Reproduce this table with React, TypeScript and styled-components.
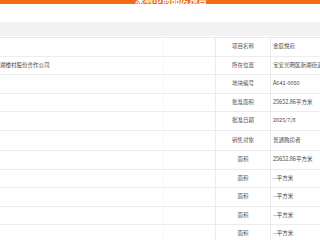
import React from "react";
import styled, { createGlobalStyle } from "styled-components";

const Global = createGlobalStyle`
  html, body { margin: 0; padding: 0; background: #ffffff; overflow: hidden; }
  body { font-family: "Noto Sans CJK SC", "Noto Sans", sans-serif; }
`;

const Page = styled.div`
  width: 320px;
  height: 240px;
  overflow: hidden;
  display: flex;
  flex-direction: column;
`;

const TopBar = styled.div`
  height: 20px;
  margin-top: -16px;
  flex: none;
  box-sizing: border-box;
  background: #f36b14;
  color: #ffffff;
  display: flex;
  justify-content: center;
  align-items: flex-end;
  padding-left: 22px;
  padding-bottom: 0.5px;
  overflow: hidden;
  font-size: 9px;
  line-height: 9px;
  font-weight: 700;
`;

const HeaderBand = styled.div`
  flex: none;
  height: 14px;
  margin-top: 18px;
  background: #f2f2f2;
`;

const Table = styled.div`
  flex: none;
  margin-top: 1px;
  border-top: 1px solid #ececec;
  display: flex;
  flex-direction: column;
`;

const Row = styled.div<{ $h: number }>`
  height: ${(p) => p.$h}px;
  box-sizing: border-box;
  display: grid;
  grid-template-columns: 163px 52px 55px 130px;
  border-bottom: 1px solid #ececec;
  font-size: 5.5px;
  line-height: 1;
`;

const Cell = styled.div<{ $line?: "faint" | "solid" }>`
  display: flex;
  align-items: center;
  overflow: hidden;
  white-space: nowrap;
  border-left: ${(p) =>
    p.$line === "faint" ? "1px solid #f6f6f6" : p.$line === "solid" ? "1px solid #ebebeb" : "none"};
`;

const LeftText = styled(Cell)`
  color: #444;
`;

const Label = styled(Cell)`
  justify-content: center;
  color: #555;
`;

const Value = styled(Cell)`
  padding-left: 2px;
  color: #444;
`;

type R = { label: string; value: string; left?: string; h?: number };

const rows: R[] = [
  { label: "项目名称", value: "金辰悦府" },
  { label: "所在位置", value: "宝安光明区新湖街道", left: "湖楼村股份合作公司" },
  { label: "地块编号", value: "A641-0050" },
  { label: "批准面积", value: "25652.86平方米" },
  { label: "批准日期", value: "2025/7/8" },
  { label: "销售对象", value: "普通购房者", h: 20.75 },
  { label: "面积", value: "25652.86平方米" },
  { label: "面积", value: "--平方米" },
  { label: "面积", value: "--平方米" },
  { label: "面积", value: "--平方米" },
  { label: "面积", value: "--平方米" },
];

export default function App() {
  return (
    <Page>
      <Global />
      <TopBar>深圳市商品房预售</TopBar>
      <HeaderBand />
      <Table>
        {rows.map((r, i) => (
          <Row key={i} $h={r.h ?? 18.5}>
            <LeftText>{r.left ?? ""}</LeftText>
            <Cell $line="faint" />
            <Label $line="solid">{r.label}</Label>
            <Value $line="solid">{r.value}</Value>
          </Row>
        ))}
      </Table>
    </Page>
  );
}
